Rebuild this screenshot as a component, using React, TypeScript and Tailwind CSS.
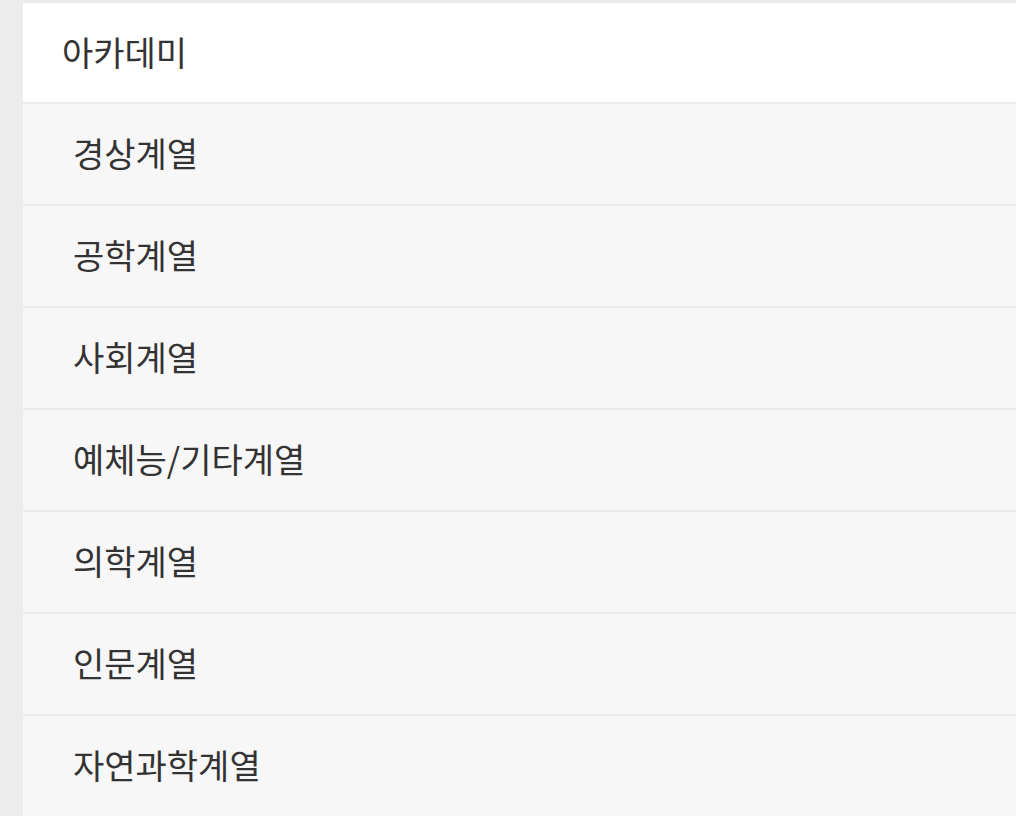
import React from "react";

const items = ["경상계열", "공학계열", "사회계열", "예체능/기타계열", "의학계열", "인문계열", "자연과학계열"];

export default function App() {
  return (
    <div
      className="flex h-[816px] w-[1016px] overflow-hidden bg-[#ececec]"
      style={{ fontFamily: '"Noto Sans CJK KR", "Noto Sans", sans-serif' }}
    >
      <div className="ml-[23px] flex flex-1 flex-col border-t-[3px] border-[#ebebeb]">
        <div className="flex h-[99px] shrink-0 items-center bg-white pb-[3px] pl-[39px] text-[34px] text-[#333333]">
          아카데미
        </div>
        {items.map((t) => (
          <div
            key={t}
            className="flex h-[102px] shrink-0 items-center border-t-2 border-[#ebebeb] bg-[#f7f7f7] pb-[3px] pl-[50px] text-[34px] text-[#333333]"
          >
            {t}
          </div>
        ))}
      </div>
    </div>
  );
}
